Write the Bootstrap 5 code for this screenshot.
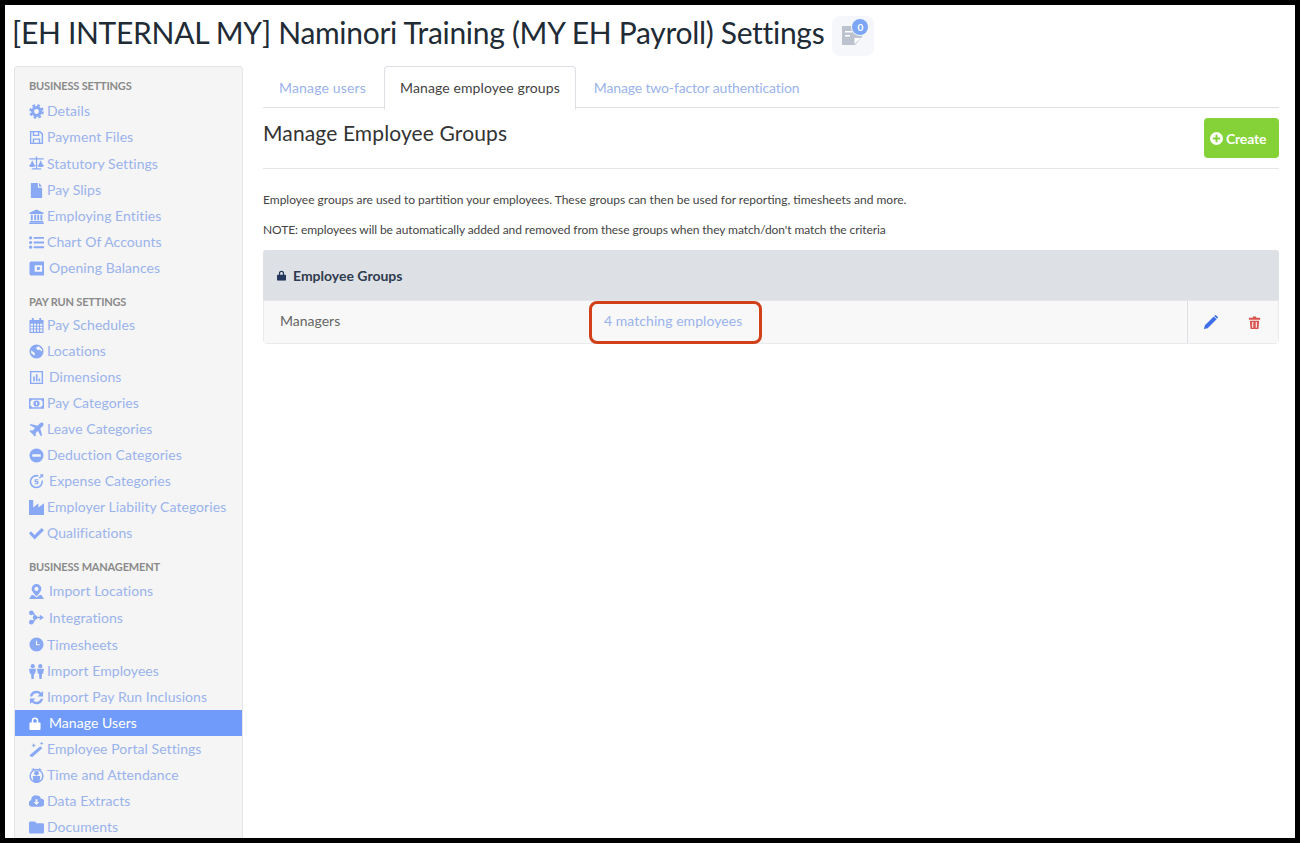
<!DOCTYPE html>
<html lang="en">
<head>
<meta charset="utf-8">
<title>Settings</title>
<link href="https://cdn.jsdelivr.net/npm/bootstrap@5.3.0/dist/css/bootstrap.min.css" rel="stylesheet">
<style>
html,body{height:843px;overflow:hidden;background:#fff}
body{font-family:"Lato","Liberation Sans",sans-serif;font-size:14px;color:#333}
.frame{height:843px;border:solid #000;border-width:5px;overflow:hidden;padding:0 16px 0 7px}
.page-title{font-size:30px;font-weight:400;line-height:40px;margin:7px 0 0;color:#212b36;letter-spacing:-.3px}
.head-row{height:61px}
.note-btn{width:42px;height:40px;margin-left:8px;margin-top:11px;background:#f5f7fb;border-radius:8px;position:relative}
.note-btn svg{position:absolute;left:10px;top:9px;width:20px;height:20px}
.note-count{position:absolute;left:20px;top:3px;width:16px;height:16px;border-radius:50%;background:#7ea6f6;box-shadow:0 0 0 1px #f5f7fb;color:#fff;font-size:10px;font-weight:700;line-height:16px;text-align:center}
.side{width:229px;margin-left:2px;background:#f5f5f6;border:1px solid #e4e5e8;border-bottom:0;border-radius:4px 4px 0 0;flex:none;height:772px;padding-top:11px;overflow:hidden}
.side-head{font-size:11px;font-weight:700;color:#8a8a8a;line-height:16px;margin:0;padding-left:14px;text-transform:uppercase;letter-spacing:-.18px}
.side-head.later{margin-top:13px}
.side-list{--bs-list-group-bg:transparent;--bs-list-group-border-width:0;border-radius:0}
.side-item{display:flex;align-items:center;height:26px;padding:0 0 0 14px;color:#9ab3ec;background:transparent;text-decoration:none;line-height:26px;letter-spacing:.06px}
.side-item.tall{height:27px}
.side-item.on{background:#719bfb;color:#fff;margin-left:-1px;padding-left:15px}
.side-item svg{width:15px;height:15px;flex:none;margin-right:3px;fill:currentColor;color:#8aa9f4;overflow:visible}
.side-item.wide svg{margin-right:5px}
.side-item.on svg{color:#fff;width:12px;height:13px;margin-right:8px}
.side-list.first{margin-top:4px}
.side-list.second{margin-top:2px}
.side-list.third{margin-top:3px}
.work{flex:1;margin-left:20px;min-width:0}
.tabs{--bs-nav-tabs-border-color:#dcdfe3;--bs-nav-tabs-link-active-border-color:#dcdfe3 #dcdfe3 #fff;--bs-nav-tabs-border-radius:4px;--bs-nav-link-padding-y:11px;--bs-nav-link-padding-x:15px;--bs-nav-link-font-size:14px;--bs-nav-link-color:#9ab3ec;--bs-nav-tabs-link-active-color:#444;gap:2px;height:42px}
.tabs .nav-link{line-height:20px;margin-bottom:-1px}
.tab-a{letter-spacing:.17px}
.tab-b{letter-spacing:.1px}
.tab-c{letter-spacing:-.15px}
.work-head{height:61px;border-bottom:1px solid #e5e5e5}
.work-title{font-size:21px;font-weight:400;margin:13px 0 0;line-height:24px;color:#333;letter-spacing:.13px}
.create-btn{width:75px;height:40px;margin-top:10px;background:#84d237;border:0;border-radius:4px;color:#fff;font-weight:700;font-size:14px;padding:0 0 0 6px;display:flex;align-items:center;justify-content:flex-start;gap:3px;letter-spacing:-.2px}
.create-btn:hover{background:#84d237;color:#fff}
.create-btn svg{width:13px;height:13px}
.copy{font-size:12px;line-height:16px;margin:0;color:#444}
.copy.one{margin-top:23px}
.copy.two{margin-top:14px;letter-spacing:-.08px}
.group-card{margin-top:12px;border:1px solid #e9ebee;border-radius:4px;height:94px;--bs-card-bg:#fff}
.group-top{height:50px;background:#dde1e6;display:flex;align-items:center;padding-left:14px;font-weight:700;font-size:14px;color:#2f3b4e;gap:7px;border-radius:3px 3px 0 0;margin:-1px -1px 0}
.group-top svg{width:9px;height:11px;fill:#25375c}
.group-row{height:43px;background:#f8f8f8;border-top:1px solid #e4e6ea;display:flex;align-items:stretch}
.group-name{width:325px;padding-left:16px;line-height:40px;color:#666;flex:none}
.match-link{width:173px;height:43px;border:3px solid #d2401a;border-radius:8px;color:#9ab3ec;text-decoration:none;line-height:34px;padding-left:12px;flex:none;letter-spacing:.05px}
.row-acts{margin-left:auto;width:91px;border-left:1px solid #dcdfe3;display:flex;align-items:center;padding-left:15px;gap:29px}
.row-acts svg{width:15px;height:15px}
</style>
</head>
<body>
<svg width="0" height="0" class="d-none">
<defs>
<symbol id="i-cog" viewBox="0 0 16 16"><circle cx="8" cy="8" r="4.200" fill="none" stroke="currentColor" stroke-width="3.200"/><circle cx="8" cy="8" r="6.500" fill="none" stroke="currentColor" stroke-width="2.600" stroke-dasharray="2.800 2.305"/></symbol>
<symbol id="i-save" viewBox="0 0 16 16"><path fill-rule="evenodd" d="M1 1h11l3 3v11H1zM2.500 2.500v11h1.500V9h8v4.500h1.500V4.700L11.300 2.500H11V6.500H4V2.500zM5.500 2.500V5H9.500V2.500zM5.500 10.500v3h5v-3z"/></symbol>
<symbol id="i-scale" viewBox="0 0 16 16"><path d="M7.300 .5h1.400v2h7v1.200h-7v9.300H13v1.500H3V13h4.300V3.700h-7V2.500h7zM3.500 4.500 5.800 9.500H1.200zM12.500 4.500 14.800 9.500h-4.600z"/><path d="M0 9.500h7c0 1.500-1.500 2.300-3.500 2.300S0 11 0 9.500zM9 9.500h7c0 1.500-1.500 2.300-3.500 2.300S9 11 9 9.500z"/></symbol>
<symbol id="i-file" viewBox="0 0 16 16"><path d="M2 0h7.500v5H14v11H2zM10.700 0 14 3.800h-3.300z"/></symbol>
<symbol id="i-bank" viewBox="0 0 16 16"><path d="M8 .5 15.500 4v1.200H.5V4zM2 6h2v6H2zM5.600 6h2v6h-2zM8.800 6h2v6h-2zM12.200 6h2v6h-2zM1 12.800h14V14H1zM.2 14.500h15.600V16H.2z"/></symbol>
<symbol id="i-list" viewBox="0 0 16 16"><circle cx="1.700" cy="3" r="1.700"/><circle cx="1.700" cy="8" r="1.700"/><circle cx="1.700" cy="13" r="1.700"/><path d="M5 2h11v2H5zM5 7h11v2H5zM5 12h11v2H5z"/></symbol>
<symbol id="i-wallet" viewBox="0 0 16 16"><path fill-rule="evenodd" d="M2.500 .5H16v15H2.500a2 2 0 0 1-2-2V2.500a2 2 0 0 1 2-2zM6 4.500v7h8v-7zM8.500 6.500h3v3h-3z"/></symbol>
<symbol id="i-cal" viewBox="0 0 16 16"><path fill-rule="evenodd" d="M3 0h2v2h6V0h2v2h2.500v14H.5V2H3zM1.700 6v2.200h2.500V6zM5.300 6v2.200h2.100V6zM8.600 6v2.200h2.100V6zM11.800 6v2.200h2.500V6zM1.700 9.200v2h2.500v-2zM5.300 9.200v2h2.100v-2zM8.600 9.200v2h2.100v-2zM11.800 9.200v2h2.500v-2zM1.700 12.300v2.400h2.500v-2.400zM5.300 12.300v2.400h2.100v-2.400zM8.600 12.300v2.400h2.100v-2.400zM11.800 12.300v2.400h2.500v-2.400z"/></symbol>
<symbol id="i-globe" viewBox="0 0 16 16"><path fill-rule="evenodd" d="M8 .5a7.500 7.500 0 1 1 0 15A7.500 7.500 0 0 1 8 .5zM10.500 2.500 7.500 4 9 6.500 11.500 6l2 2 .5-2zM2.500 7l-.5 2 3.500 3.500 1-2-1-1.500z"/></symbol>
<symbol id="i-chart" viewBox="0 0 16 16"><path fill-rule="evenodd" d="M1 1h14v14H1zM2.500 2.500v11h11v-11zM4.500 7h1.700v5H4.500zM7.400 4.500h1.700V12H7.400zM10.200 9h1.700v3h-1.700z"/></symbol>
<symbol id="i-money" viewBox="0 0 16 16"><path fill-rule="evenodd" d="M0 2.500h16v11H0zM3 4A1.500 1.500 0 0 1 1.500 5.500v5A1.500 1.500 0 0 1 3 12h10a1.500 1.500 0 0 1 1.500-1.500v-5A1.500 1.500 0 0 1 13 4zM8 4.700a3.300 3.300 0 1 1 0 6.600 3.300 3.300 0 0 1 0-6.600zM7.300 6.300v3.400h1.400V6.300z"/></symbol>
<symbol id="i-plane" viewBox="0 0 16 16"><path d="M15 1c-1-1-2.500-.5-3.500.5L9 4 2 2 .7 3.300 6.500 6.500 4 9 1.700 8.700.5 9.900 3.500 12.500 6.100 15.500 7.300 14.300 7 12l2.500-2.500 3.200 5.800L14 14 12 7l2.500-2.500c1-1 1.500-2.500.5-3.500z"/></symbol>
<symbol id="i-minus" viewBox="0 0 16 16"><path fill-rule="evenodd" d="M8 .5a7.500 7.500 0 1 1 0 15A7.500 7.500 0 0 1 8 .5zM3.500 6.700v2.600h9V6.700z"/></symbol>
<symbol id="i-dollar" viewBox="0 0 16 16"><path fill="none" stroke="currentColor" stroke-width="1.700" d="M10 2.200A6.300 6.300 0 1 0 14 7"/><path d="M12 0l3.500.5-1 3.500-1-1-2 2-1-1 2-2z"/><path d="M6 5.500h4v1.200H7.500v.8h2.500v3.500H6v-1.200h2.500v-1H6z"/></symbol>
<symbol id="i-factory" viewBox="0 0 16 16"><path d="M0 0h4.500v8l5.500-4.500v4.500l6-4.500V16H0z"/></symbol>
<symbol id="i-check" viewBox="0 0 16 16"><path d="M2 5.500 6 9.500 13.500 2 16 4.500 6 14.500 0 8z"/></symbol>
<symbol id="i-pin" viewBox="0 0 16 16"><path fill-rule="evenodd" d="M8 0a5.200 5.200 0 0 1 5.200 5.200c0 2.500-3.200 5.800-5.200 7.800-2-2-5.200-5.300-5.200-7.800A5.200 5.200 0 0 1 8 0zM8 3a2.200 2.200 0 1 0 0 4.400A2.200 2.200 0 0 0 8 3z"/><path d="M3 11.500 5.500 12.300 8 14.500l2.500-2.200 2.500-.8 3 4.500H0z"/></symbol>
<symbol id="i-flow" viewBox="0 0 16 16"><circle cx="2.500" cy="3" r="2.500"/><circle cx="2.500" cy="13" r="2.500"/><circle cx="6.500" cy="8" r="2.500"/><path fill="none" stroke="currentColor" stroke-width="1.500" d="M3 3c3 0 3 3 3.500 5C6 10 6 13 3 13M8 8h5"/><path d="M11.500 5 16 8l-4.500 3z"/></symbol>
<symbol id="i-clock" viewBox="0 0 16 16"><path fill-rule="evenodd" d="M8 .5a7.500 7.500 0 1 1 0 15A7.500 7.500 0 0 1 8 .5zM7.400 4v4.700h4.100V7.600H8.600V4z"/></symbol>
<symbol id="i-people" viewBox="0 0 16 16"><circle cx="4" cy="2.300" r="2.200"/><circle cx="12" cy="2.300" r="2.200"/><path d="M0 5h7.500l-1 5.500H5.400L5 16H2.600l-.4-5.500H1zM8.500 5H16l-1 5.500h-1.100L13.500 16h-2.400l-.4-5.500H9.500z"/></symbol>
<symbol id="i-sync" viewBox="0 0 16 16"><path d="M15 1v6h-6l2.300-2.300A4.700 4.700 0 0 0 3.500 6.800H1A7 7 0 0 1 13 3zM1 15V9h6l-2.300 2.300a4.700 4.700 0 0 0 7.800-2.100H15A7 7 0 0 1 3 13z"/></symbol>
<symbol id="i-lock" viewBox="0 0 12 14"><path fill-rule="evenodd" d="M2.500 6V4a3.500 3.500 0 0 1 7 0v2H11a1 1 0 0 1 1 1v6a1 1 0 0 1-1 1H1a1 1 0 0 1-1-1V7a1 1 0 0 1 1-1zM4.200 6h3.600V4a1.800 1.800 0 0 0-3.600 0z"/></symbol>
<symbol id="i-wand" viewBox="0 0 16 16"><path d="M12 4.500 14.200 6.700 3 16.500.5 14zM5 1l.7 1.800 1.800.7-1.800.7L5 6l-.7-1.800-1.800-.7 1.800-.7zM13.500-.5l.6 1.400 1.400.6-1.400.6-.6 1.400-.6-1.400-1.400-.6 1.400-.6z"/></symbol>
<symbol id="i-time" viewBox="0 0 16 16"><circle cx="8" cy="8.500" r="6.800" fill="none" stroke="currentColor" stroke-width="1.600"/><circle cx="8" cy="5.500" r="2.500"/><path d="M4 8.500h8L11.300 15H4.700zM2 1.500 5.500 0 5 2zM14 1.500 10.500 0 11 2z"/></symbol>
<symbol id="i-cloud" viewBox="0 0 16 16"><path fill-rule="evenodd" d="M8.500 1.500a4.200 4.200 0 0 1 4.100 3.500A4 4 0 0 1 12.500 13.500h-9A3.500 3.500 0 0 1 2.400 6.600 4.700 4.700 0 0 1 8.500 1.500zM7 5.500v3H5l3 3.300 3-3.300H9v-3z"/></symbol>
<symbol id="i-folder" viewBox="0 0 16 16"><path d="M1.500 1.500h5l1.500 2h6.500A1.500 1.500 0 0 1 16 5v8a1.500 1.500 0 0 1-1.500 1.500h-13A1.500 1.500 0 0 1 0 13V3a1.500 1.500 0 0 1 1.500-1.500z"/></symbol>
</defs>
</svg>
<div class="frame">
  <div class="head-row d-flex align-items-start">
    <h1 class="page-title">[EH INTERNAL MY] Naminori Training (MY EH Payroll) Settings</h1>
    <div class="note-btn">
      <svg viewBox="0 0 20 20"><path fill="#bcc3cf" d="M0 1h20v11l-7 8H0z"/><path fill="#fff" d="M3 6h7v1.500H3zM3 10h5v1.500H3zM12.500 19v-6H19z"/></svg>
      <span class="note-count">0</span>
    </div>
  </div>
  <div class="d-flex">
    <nav class="side">
      <p class="side-head">Business Settings</p>
      <div class="list-group side-list first">
        <a class="side-item" href="#"><svg><use href="#i-cog"/></svg>Details</a>
        <a class="side-item" href="#"><svg><use href="#i-save"/></svg>Payment Files</a>
        <a class="side-item tall" href="#"><svg><use href="#i-scale"/></svg>Statutory Settings</a>
        <a class="side-item" href="#"><svg><use href="#i-file"/></svg>Pay Slips</a>
        <a class="side-item" href="#"><svg><use href="#i-bank"/></svg>Employing Entities</a>
        <a class="side-item" href="#"><svg><use href="#i-list"/></svg>Chart Of Accounts</a>
        <a class="side-item wide" href="#"><svg><use href="#i-wallet"/></svg>Opening Balances</a>
      </div>
      <p class="side-head later">Pay Run Settings</p>
      <div class="list-group side-list second">
        <a class="side-item" href="#"><svg><use href="#i-cal"/></svg>Pay Schedules</a>
        <a class="side-item" href="#"><svg><use href="#i-globe"/></svg>Locations</a>
        <a class="side-item wide" href="#"><svg><use href="#i-chart"/></svg>Dimensions</a>
        <a class="side-item" href="#"><svg><use href="#i-money"/></svg>Pay Categories</a>
        <a class="side-item" href="#"><svg><use href="#i-plane"/></svg>Leave Categories</a>
        <a class="side-item" href="#"><svg><use href="#i-minus"/></svg>Deduction Categories</a>
        <a class="side-item wide" href="#"><svg><use href="#i-dollar"/></svg>Expense Categories</a>
        <a class="side-item" href="#"><svg><use href="#i-factory"/></svg>Employer Liability Categories</a>
        <a class="side-item" href="#"><svg><use href="#i-check"/></svg>Qualifications</a>
      </div>
      <p class="side-head later">Business Management</p>
      <div class="list-group side-list third">
        <a class="side-item wide" href="#"><svg><use href="#i-pin"/></svg>Import Locations</a>
        <a class="side-item wide tall" href="#"><svg><use href="#i-flow"/></svg>Integrations</a>
        <a class="side-item tall" href="#"><svg><use href="#i-clock"/></svg>Timesheets</a>
        <a class="side-item" href="#"><svg><use href="#i-people"/></svg>Import Employees</a>
        <a class="side-item" href="#"><svg><use href="#i-sync"/></svg>Import Pay Run Inclusions</a>
        <a class="side-item on" href="#" aria-current="true"><svg><use href="#i-lock"/></svg>Manage Users</a>
        <a class="side-item" href="#"><svg><use href="#i-wand"/></svg>Employee Portal Settings</a>
        <a class="side-item" href="#"><svg><use href="#i-time"/></svg>Time and Attendance</a>
        <a class="side-item" href="#"><svg><use href="#i-cloud"/></svg>Data Extracts</a>
        <a class="side-item" href="#"><svg><use href="#i-folder"/></svg>Documents</a>
      </div>
    </nav>
    <main class="work">
      <ul class="nav nav-tabs tabs">
        <li class="nav-item"><a class="nav-link tab-a" href="#">Manage users</a></li>
        <li class="nav-item"><a class="nav-link active tab-b" href="#">Manage employee groups</a></li>
        <li class="nav-item"><a class="nav-link tab-c" href="#">Manage two-factor authentication</a></li>
      </ul>
      <div class="work-head d-flex justify-content-between align-items-start">
        <h2 class="work-title">Manage Employee Groups</h2>
        <button class="btn create-btn" type="button"><svg viewBox="0 0 16 16"><path fill="#fff" fill-rule="evenodd" d="M8 0a8 8 0 1 1 0 16A8 8 0 0 1 8 0zM6.800 3.500v3.300H3.500v2.400h3.300v3.300h2.400V9.200h3.300V6.800H9.200V3.500z"/></svg>Create</button>
      </div>
      <p class="copy one">Employee groups are used to partition your employees. These groups can then be used for reporting, timesheets and more.</p>
      <p class="copy two">NOTE: employees will be automatically added and removed from these groups when they match/don't match the criteria</p>
      <div class="card group-card">
        <div class="group-top"><svg viewBox="0 0 12 14"><use href="#i-lock"/></svg>Employee Groups</div>
        <div class="group-row">
          <div class="group-name">Managers</div>
          <a class="match-link" href="#">4 matching employees</a>
          <div class="row-acts">
            <svg viewBox="0 0 16 16"><path fill="#3f6fe8" d="M11.500 1.500 14.500 4.500 5 14 1 15l1-4zM12.500.5a1.200 1.200 0 0 1 1.700 0l1.300 1.300a1.200 1.200 0 0 1 0 1.700l-.5.500-3-3z"/></svg>
            <svg viewBox="0 0 16 16"><path fill="#d9534f" d="M2 3h4l.5-1.500h3L10 3h4v2H2zM3 6h10l-.8 9H3.800zM5.500 7.500v6h1.200v-6zM9.300 7.500v6h1.200v-6z"/></svg>
          </div>
        </div>
      </div>
    </main>
  </div>
</div>
<script src="https://cdn.jsdelivr.net/npm/bootstrap@5.3.0/dist/js/bootstrap.bundle.min.js"></script>
</body>
</html>
